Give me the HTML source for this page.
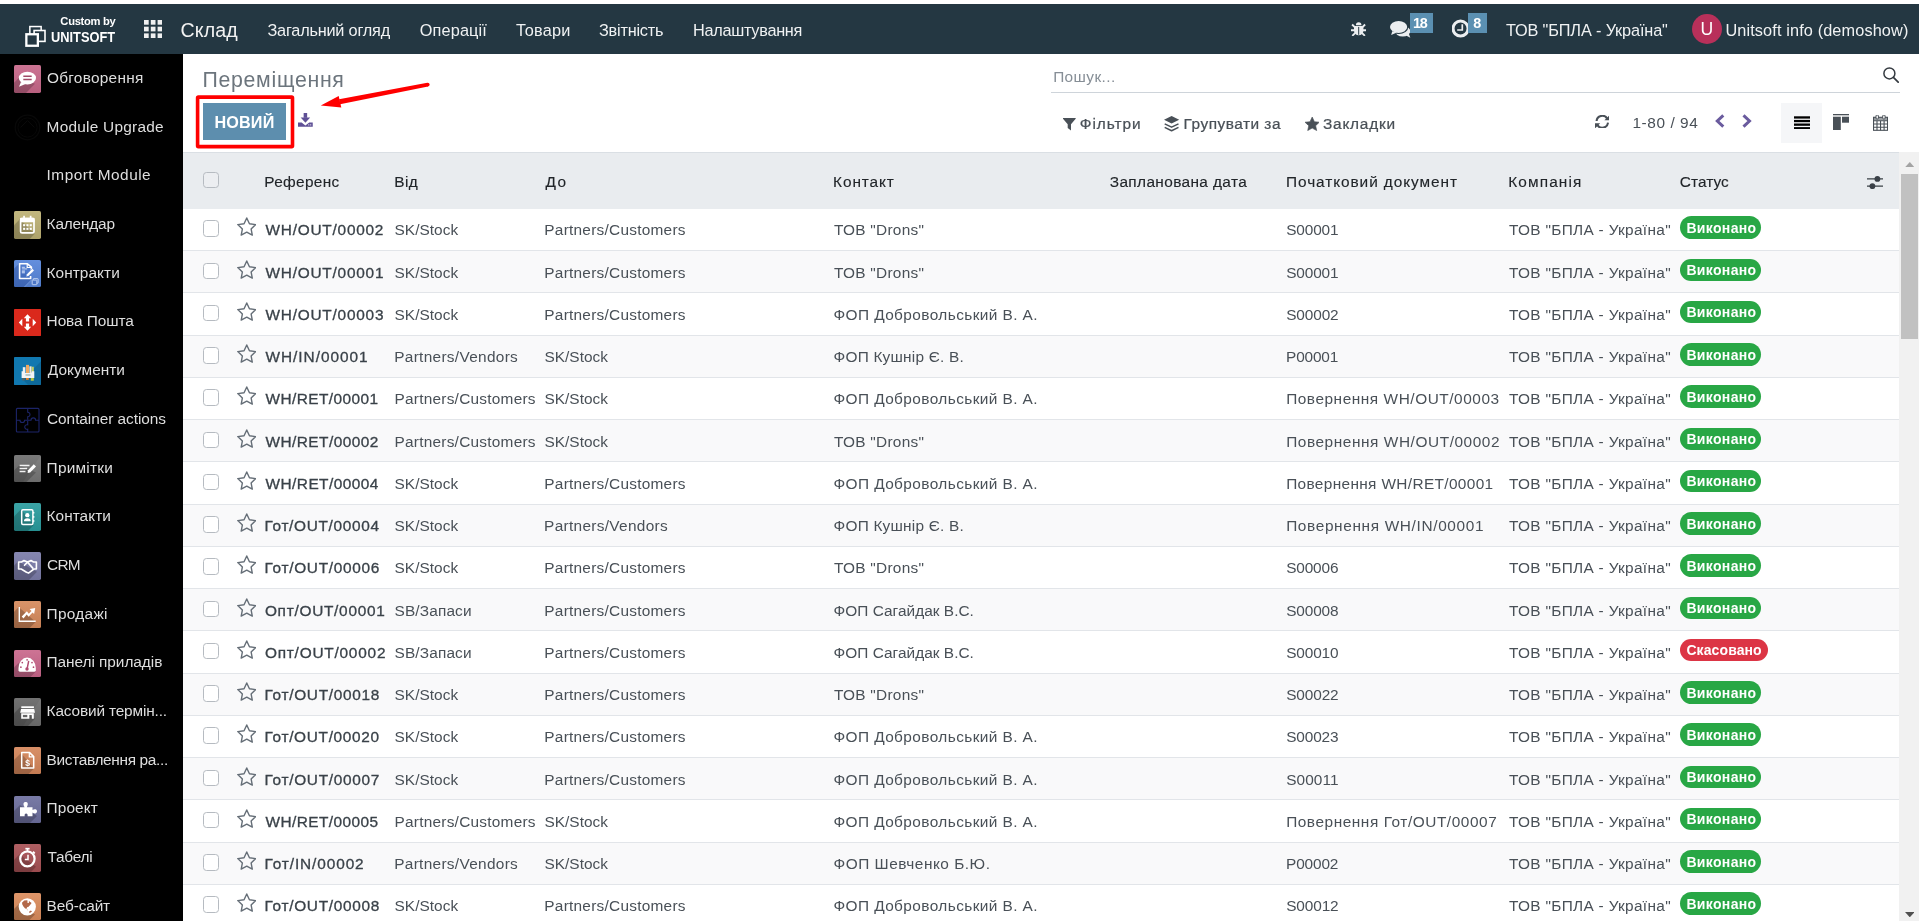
<!DOCTYPE html>
<html lang="uk"><head><meta charset="utf-8"><title>Переміщення</title><style>
html,body{margin:0;padding:0;background:#fff;}
body{width:1919px;height:921px;overflow:hidden;position:relative;font-family:"Liberation Sans", sans-serif;}
#app{position:absolute;left:0;top:0;width:1919px;height:921px;overflow:hidden;will-change:transform;}
.b{position:absolute;display:block;box-sizing:border-box;}
.t{position:absolute;white-space:nowrap;display:block;}
</style></head><body>
<div id="app">
<div class="b" style="left:0.00px;top:4.00px;width:1919.00px;height:49.50px;background:#243742;"></div>
<svg class="b" preserveAspectRatio="none" style="left:25.00px;top:25.00px;" width="22" height="22" viewBox="0 0 22 22"><g fill="none" stroke="#fff"><rect x="4.85" y="1.55" width="11.3" height="11.3" stroke-width="1.5"/><rect x="9.1" y="5.5" width="10.9" height="10.9" fill="#243742" stroke-width="1.6"/><rect x="1.35" y="9.25" width="11.5" height="11.5" fill="#243742" stroke-width="2.3"/></g></svg>
<span class="t" id="t0" style="left:60.36px;top:14.22px;font-size:11.2px;font-weight:700;color:#fff;line-height:15px;letter-spacing:-0.298px;">Custom by</span>
<span class="t" id="t1" style="left:51.20px;top:26.60px;font-size:15.3px;font-weight:700;color:#fff;line-height:20px;transform-origin:0 50%;transform:scaleX(0.838);">UNITSOFT</span>
<svg class="b" preserveAspectRatio="none" style="left:143.75px;top:20.00px;" width="18.4" height="18.2" viewBox="0 0 18.4 18.2"><g fill="#f0f0f0"><rect x="0.00" y="0.00" width="4.7" height="4.7"/><rect x="6.80" y="0.00" width="4.7" height="4.7"/><rect x="13.60" y="0.00" width="4.7" height="4.7"/><rect x="0.00" y="6.70" width="4.7" height="4.7"/><rect x="6.80" y="6.70" width="4.7" height="4.7"/><rect x="13.60" y="6.70" width="4.7" height="4.7"/><rect x="0.00" y="13.40" width="4.7" height="4.7"/><rect x="6.80" y="13.40" width="4.7" height="4.7"/><rect x="13.60" y="13.40" width="4.7" height="4.7"/></g></svg>
<span class="t" id="t2" style="left:180.52px;top:18.31px;font-size:19.6px;font-weight:400;color:#f2f2f2;line-height:25px;letter-spacing:0.126px;">Склад</span>
<span class="t" id="t3" style="left:267.50px;top:20.35px;font-size:16.3px;font-weight:400;color:#f0f2f3;line-height:21px;letter-spacing:-0.216px;">Загальний огляд</span>
<span class="t" id="t4" style="left:419.82px;top:20.35px;font-size:16.3px;font-weight:400;color:#f0f2f3;line-height:21px;letter-spacing:0.124px;">Операції</span>
<span class="t" id="t5" style="left:515.91px;top:20.35px;font-size:16.3px;font-weight:400;color:#f0f2f3;line-height:21px;letter-spacing:0.229px;">Товари</span>
<span class="t" id="t6" style="left:599.00px;top:20.35px;font-size:16.3px;font-weight:400;color:#f0f2f3;line-height:21px;letter-spacing:-0.216px;">Звітність</span>
<span class="t" id="t7" style="left:692.97px;top:20.35px;font-size:16.3px;font-weight:400;color:#f0f2f3;line-height:21px;letter-spacing:-0.283px;">Налаштування</span>
<svg class="b" preserveAspectRatio="none" style="left:1350.80px;top:20.90px;" width="15.2" height="15.3" viewBox="0 0 15.2 15.3"><g fill="#eceef0" stroke="#eceef0" stroke-linecap="butt"><path d="M4.900 4.300a2.800 3.100 0 0 1 5.600 0z" stroke="none"/><path d="M3 5H12.400V9.800a4.700 4.500 0 0 1-9.400 0z" stroke="none"/><g stroke-width="1.900" fill="none"><path d="M0 9.300H3.600M11.800 9.300H15.200M1.100 3.500L4 6.400M14.100 3.500L11.200 6.400M1.300 14.800L4.300 11.800M13.900 14.800L10.900 11.800"/></g><rect x="7.200" y="5.900" width="1" height="7.900" fill="#243742" stroke="none"/></g></svg>
<svg class="b" preserveAspectRatio="none" style="left:1389.80px;top:20.90px;" width="21" height="17" viewBox="0 0 21 17"><g fill="#eceef0"><ellipse cx="12.700" cy="10.300" rx="7.600" ry="5.300"/><path d="M15.500 14.300L20.300 16.800L18.800 12.500z"/><ellipse cx="8.600" cy="6" rx="9.700" ry="7.100" fill="#243742"/><ellipse cx="8.600" cy="6" rx="8.600" ry="6"/><path d="M2.300 10.200L1.100 14L7 11.600z"/></g></svg>
<div class="b" style="left:1409.80px;top:13.00px;width:23.00px;height:19.75px;background:#5b90b2;"></div>
<span class="t" id="t8" style="left:1413.00px;top:13.51px;font-size:14.4px;font-weight:700;color:#fff;line-height:19px;letter-spacing:-1.188px;">18</span>
<svg class="b" preserveAspectRatio="none" style="left:1451.70px;top:18.80px;" width="17.6" height="19.4" viewBox="0 0 17.6 19.4"><circle cx="8.550" cy="9.600" r="7.500" fill="none" stroke="#eceef0" stroke-width="3"/><path d="M10.300 5.200V11H5.200" fill="none" stroke="#eceef0" stroke-width="1.700"/></svg>
<div class="b" style="left:1467.90px;top:13.00px;width:19.00px;height:19.75px;background:#5b90b2;"></div>
<span class="t" id="t9" style="left:1473.32px;top:13.51px;font-size:14.4px;font-weight:700;color:#fff;line-height:19px;letter-spacing:-1.991px;">8</span>
<span class="t" id="t10" style="left:1505.92px;top:20.15px;font-size:16.3px;font-weight:400;color:#f0f2f3;line-height:21px;letter-spacing:-0.141px;">ТОВ "БПЛА - Україна"</span>
<div class="b" style="left:1692.10px;top:14.00px;width:30.00px;height:30.00px;background:#b8305a;border-radius:50%;"></div>
<span class="t" id="t11" style="left:1700.55px;top:17.70px;font-size:17.6px;font-weight:400;color:#fff;line-height:23px;letter-spacing:3.881px;">U</span>
<span class="t" id="t12" style="left:1725.40px;top:19.85px;font-size:16.3px;font-weight:400;color:#f0f2f3;line-height:21px;letter-spacing:0.125px;">Unitsoft info (demoshow)</span>
<div class="b" style="left:0.00px;top:53.50px;width:182.75px;height:870.00px;background:#000;"></div>
<svg class="b" preserveAspectRatio="none" style="left:14.00px;top:65.00px;" width="27" height="28" viewBox="0 0 27 27"><defs><clipPath id="ic0"><rect width="27" height="27" rx="1.600"/></clipPath></defs><g clip-path="url(#ic0)"><rect width="27" height="27" fill="#c8688a"/><rect width="27" height="27" fill="url(#gl)"/><polygon points="5.2,12 0,17.2 0,27 12,27 21,18" fill="#000" fill-opacity="0.2"/><ellipse cx="13.4" cy="12.600" rx="8.600" ry="6.100" fill="#fff"/><path d="M7 16.500 L5 20.900 L11.500 18.300z" fill="#fff"/><path d="M9.300 10.800H17.700M9.300 14H17.700" stroke="#a04a68" stroke-width="1.400"/></g></svg>
<span class="t" id="t13" style="left:46.92px;top:67.66px;font-size:15.4px;font-weight:400;color:#dedede;line-height:20px;letter-spacing:0.280px;">Обговорення</span>
<svg class="b" preserveAspectRatio="none" style="left:14.00px;top:114.00px;" width="27" height="27" viewBox="0 0 27 27"><circle cx="13.500" cy="13.500" r="12.300" fill="none" stroke="#090909" stroke-width="1.200"/><circle cx="13.500" cy="13.500" r="9.600" fill="none" stroke="#080808" stroke-width="1"/><path d="M6.500 13.500L13.500 6.500L20.500 13.500" fill="none" stroke="#0a0a0a" stroke-width="1"/></svg>
<span class="t" id="t14" style="left:46.60px;top:116.66px;font-size:15.4px;font-weight:400;color:#dedede;line-height:20px;letter-spacing:0.251px;">Module Upgrade</span>
<span class="t" id="t15" style="left:46.60px;top:164.66px;font-size:15.4px;font-weight:400;color:#dedede;line-height:20px;letter-spacing:0.471px;">Import Module</span>
<svg class="b" preserveAspectRatio="none" style="left:14.00px;top:211.00px;" width="27" height="28" viewBox="0 0 27 27"><defs><clipPath id="ic3"><rect width="27" height="27" rx="1.600"/></clipPath></defs><g clip-path="url(#ic3)"><rect width="27" height="27" fill="#bdb174"/><rect width="27" height="27" fill="url(#gl)"/><polygon points="5.8,8 0,13.8 0,27 15.8,27 20.8,22" fill="#000" fill-opacity="0.2"/><rect x="6.600" y="7.400" width="13.400" height="13.800" rx="1.500" fill="none" stroke="#fff" stroke-width="1.700"/><rect x="6" y="6.600" width="14.600" height="4.200" rx="1" fill="#fff"/><rect x="9.200" y="4.600" width="1.700" height="3.400" fill="#fff"/><rect x="15.800" y="4.600" width="1.700" height="3.400" fill="#fff"/><rect x="9.1" y="12.7" width="2.100" height="2" fill="#fff"/><rect x="12.4" y="12.7" width="2.100" height="2" fill="#fff"/><rect x="15.7" y="12.7" width="2.100" height="2" fill="#fff"/><rect x="9.1" y="16.2" width="2.100" height="2" fill="#fff"/><rect x="12.4" y="16.2" width="2.100" height="2" fill="#fff"/><rect x="15.7" y="16.2" width="2.100" height="2" fill="#fff"/></g></svg>
<span class="t" id="t16" style="left:46.60px;top:213.66px;font-size:15.4px;font-weight:400;color:#dedede;line-height:20px;letter-spacing:-0.170px;">Календар</span>
<svg class="b" preserveAspectRatio="none" style="left:14.00px;top:260.00px;" width="27" height="27" viewBox="0 0 27 27"><defs><clipPath id="ic4"><rect width="27" height="27" rx="1.600"/></clipPath></defs><g clip-path="url(#ic4)"><rect width="27" height="27" fill="#5685da"/><rect width="27" height="27" fill="url(#gl)"/><polygon points="0,0 0,27 10,27 27,10 27,27 27,27 10,27" fill="#000" fill-opacity="0"/><polygon points="4.800,4 0,8.800 0,27 9.700,27 17.400,19.300" fill="#1c3f8c" fill-opacity="0.350"/><polygon points="9.700,27 11.200,27 18.600,19.600 17.400,19.300" fill="#fff" fill-opacity="0.120"/><path d="M17.400 12.500V7.200L13.400 3.800H5.600V18.500H16.600V16" fill="#4470c4" fill-opacity="0.550" stroke="#fff" stroke-width="1.600" stroke-linejoin="round"/><path d="M13.200 3.900V7.500H17.200" fill="none" stroke="#fff" stroke-width="1.200"/><path d="M7.800 7.300H10.900M7.800 8.900H13.200" stroke="#c9d8f4" stroke-width="1"/><rect x="7.800" y="10.300" width="3.100" height="3.100" fill="#aec3ec"/><path d="M12 16.800L12.700 14.200L18.300 8.600L20.300 10.500L14.600 16.100z" fill="#fff" stroke="#4a76c8" stroke-width="0.500"/><rect x="19.300" y="18.600" width="4.800" height="4.600" rx="0.400" fill="none" stroke="#c4d4f2" stroke-width="0.900"/><rect x="18.200" y="20.100" width="4.600" height="4.600" rx="0.400" fill="#4a74c4" stroke="#c4d4f2" stroke-width="0.900"/></g></svg>
<span class="t" id="t17" style="left:46.60px;top:262.66px;font-size:15.4px;font-weight:400;color:#dedede;line-height:20px;letter-spacing:0.048px;">Контракти</span>
<svg class="b" preserveAspectRatio="none" style="left:14.00px;top:309.00px;" width="27" height="27" viewBox="0 0 27 27"><defs><clipPath id="ic5"><rect width="27" height="27" rx="0.4"/></clipPath></defs><g clip-path="url(#ic5)"><rect width="27" height="27" fill="#da291c"/><path d="M13.500 5.200L17.200 9.200H15.100V12.600H11.900V9.200H9.800z" fill="#fff"/><path d="M13.500 21.800L17.200 17.800H15.100V14.600H11.900V17.800H9.800z" fill="#fff"/><path d="M4.800 13.500L8.300 9.800V17.200z" fill="#fff"/><path d="M22.200 13.500L18.700 9.800V17.200z" fill="#fff"/></g></svg>
<span class="t" id="t18" style="left:46.60px;top:310.66px;font-size:15.4px;font-weight:400;color:#dedede;line-height:20px;letter-spacing:-0.083px;">Нова Пошта</span>
<svg class="b" preserveAspectRatio="none" style="left:14.00px;top:357.00px;" width="27" height="28" viewBox="0 0 27 27"><defs><clipPath id="ic6"><rect width="27" height="27" rx="0.4"/></clipPath></defs><g clip-path="url(#ic6)"><rect width="27" height="27" fill="#1178b0"/><polygon points="9,22 27,4 27,27 14,27" fill="#000" fill-opacity="0.120"/><rect x="8.800" y="9.800" width="2.600" height="7" fill="#e8eef2"/><rect x="12" y="7.600" width="3" height="9" fill="#f0a860"/><rect x="15.400" y="9" width="2.200" height="8" fill="#f4ead8"/><rect x="17.800" y="9.400" width="2" height="8" fill="#c8d060"/><path d="M7.600 13.800H10.300L11 15.400H17.200L17.900 13.800H20.300V20.300H7.600z" fill="#f2f4f6"/><rect x="11.500" y="16.800" width="5" height="1.100" fill="#8aa"/><rect x="8.200" y="20.300" width="2.600" height="2.300" fill="#566"/><rect x="12" y="20.300" width="2.800" height="1.700" fill="#f08020"/><rect x="16.800" y="20.300" width="3" height="2.600" fill="#b8c840"/></g></svg>
<span class="t" id="t19" style="left:47.80px;top:359.66px;font-size:15.4px;font-weight:400;color:#dedede;line-height:20px;letter-spacing:0.035px;">Документи</span>
<svg class="b" preserveAspectRatio="none" style="left:14.00px;top:406.00px;" width="27" height="27" viewBox="0 0 27 27"><g fill="none" stroke="#1c2468" stroke-width="1.100"><rect x="2.400" y="2.400" width="22.600" height="23.600" rx="1"/><path d="M13.700 2.400V6.200a2.300 2.300 0 1 1 0 4.600V13.800"/><path d="M13.700 14.600V18.800a2.300 2.300 0 1 0 0 4.400V26"/><path d="M2.400 14.200H6a2.300 2.300 0 1 0 4.600 0H13.700"/><path d="M13.700 14.200H17a2.300 2.300 0 1 1 4.600 0H25"/></g></svg>
<span class="t" id="t20" style="left:47.04px;top:408.66px;font-size:15.4px;font-weight:400;color:#dedede;line-height:20px;letter-spacing:-0.046px;">Container actions</span>
<svg class="b" preserveAspectRatio="none" style="left:14.00px;top:455.00px;" width="27" height="27" viewBox="0 0 27 27"><defs><clipPath id="ic8"><rect width="27" height="27" rx="1.600"/></clipPath></defs><g clip-path="url(#ic8)"><rect width="27" height="27" fill="#6e6e6e"/><rect width="27" height="27" fill="url(#gl)"/><polygon points="27,0 27,27 9,27" fill="#fff" fill-opacity="0.050"/><polygon points="5.6,10 0,15.6 0,27 12.5,27 22,17.5" fill="#000" fill-opacity="0.2"/><path d="M5.600 10.500H15.500M5.600 13.500H13.200M5.600 16.500H11.500" stroke="#f2f2f2" stroke-width="1.700"/><path d="M14 15.300L19.800 9.300L22 11.400L16.200 17.400L13.600 17.900z" fill="#fff"/></g></svg>
<span class="t" id="t21" style="left:46.60px;top:457.66px;font-size:15.4px;font-weight:400;color:#dedede;line-height:20px;letter-spacing:0.234px;">Примітки</span>
<svg class="b" preserveAspectRatio="none" style="left:14.00px;top:503.00px;" width="27" height="28" viewBox="0 0 27 27"><defs><clipPath id="ic9"><rect width="27" height="27" rx="1.600"/></clipPath></defs><g clip-path="url(#ic9)"><rect width="27" height="27" fill="#2a9c9e"/><rect width="27" height="27" fill="url(#gl)"/><polygon points="7,6 0,13 0,27 14,27 20,21" fill="#000" fill-opacity="0.2"/><rect x="7.700" y="6.600" width="11.200" height="14.200" rx="1.200" fill="none" stroke="#fff" stroke-width="1.500"/><circle cx="13.300" cy="11.700" r="2.100" fill="#fff"/><path d="M9.900 17.600a3.400 3 0 0 1 6.800 0z" fill="#fff"/><path d="M19.700 8.600v1.600M19.700 12.600v1.600M19.700 16.600v1.600" stroke="#fff" stroke-width="1.300"/></g></svg>
<span class="t" id="t22" style="left:46.60px;top:505.66px;font-size:15.4px;font-weight:400;color:#dedede;line-height:20px;letter-spacing:0.030px;">Контакти</span>
<svg class="b" preserveAspectRatio="none" style="left:14.00px;top:552.00px;" width="27" height="28" viewBox="0 0 27 27"><defs><clipPath id="ic10"><rect width="27" height="27" rx="1.600"/></clipPath></defs><g clip-path="url(#ic10)"><rect width="27" height="27" fill="#7b7ca9"/><rect width="27" height="27" fill="url(#gl)"/><polygon points="4,9 0,13 0,27 15,27 23,19" fill="#000" fill-opacity="0.2"/><g fill="none" stroke="#fff" stroke-width="1.600" stroke-linejoin="round" stroke-linecap="round"><path d="M4.600 9.600H7.500L10 8.300L13.500 9.600L17 8.300L19.500 9.600H22.400V16.400H20L14.500 20.300L12.500 19.600L7.200 16.400H4.600z"/><path d="M10.500 12.800L13.500 9.800L18.800 15.600"/></g></g></svg>
<span class="t" id="t23" style="left:47.04px;top:554.66px;font-size:15.4px;font-weight:400;color:#dedede;line-height:20px;letter-spacing:-0.724px;">CRM</span>
<svg class="b" preserveAspectRatio="none" style="left:14.00px;top:601.00px;" width="27" height="27" viewBox="0 0 27 27"><defs><clipPath id="ic11"><rect width="27" height="27" rx="1.600"/></clipPath></defs><g clip-path="url(#ic11)"><rect width="27" height="27" fill="#d68a5c"/><rect width="27" height="27" fill="url(#gl)"/><polygon points="4.7,6 0,10.7 0,27 15.599999999999998,27 21.7,20.9" fill="#000" fill-opacity="0.22"/><path d="M5.300 5.900V20.200H21.700" fill="none" stroke="#fff" stroke-width="1.400"/><path d="M7.700 15.500L12.900 10.300L14.800 12.700L17.500 9.900L15.600 8.100L21.200 7.100L20.100 13L18.500 11.400L14.600 15.700L12.700 13.400L9.500 17.400z" fill="#fff"/></g></svg>
<span class="t" id="t24" style="left:46.60px;top:603.66px;font-size:15.4px;font-weight:400;color:#dedede;line-height:20px;letter-spacing:0.289px;">Продажі</span>
<svg class="b" preserveAspectRatio="none" style="left:14.00px;top:650.00px;" width="27" height="27" viewBox="0 0 27 27"><defs><clipPath id="ic12"><rect width="27" height="27" rx="1.600"/></clipPath></defs><g clip-path="url(#ic12)"><rect width="27" height="27" fill="#c9678b"/><rect width="27" height="27" fill="url(#gl)"/><polygon points="4.5,13 0,17.5 0,27 16.5,27 21.8,21.7" fill="#000" fill-opacity="0.2"/><path d="M4.500 18a8.650 10.400 0 0 1 17.300 0v2.300a1.400 1.400 0 0 1-1.400 1.400H5.900a1.400 1.400 0 0 1-1.400-1.400z" fill="#fff"/><path d="M13 19.300L14.600 11.400" stroke="#b04a70" stroke-width="1.500" stroke-linecap="round"/><circle cx="13" cy="19" r="1.700" fill="#b04a70"/><g fill="#b04a70"><circle cx="6.900" cy="17.200" r=".850"/><circle cx="8.300" cy="12.600" r=".850"/><circle cx="13.100" cy="9.800" r=".850"/><circle cx="18" cy="12.600" r=".850"/><circle cx="19.500" cy="17.200" r=".850"/></g></g></svg>
<span class="t" id="t25" style="left:46.60px;top:651.66px;font-size:15.4px;font-weight:400;color:#dedede;line-height:20px;letter-spacing:-0.052px;">Панелі приладів</span>
<svg class="b" preserveAspectRatio="none" style="left:14.00px;top:698.00px;" width="27" height="28" viewBox="0 0 27 27"><defs><clipPath id="ic13"><rect width="27" height="27" rx="1.600"/></clipPath></defs><g clip-path="url(#ic13)"><rect width="27" height="27" fill="#666"/><rect width="27" height="27" fill="url(#gl)"/><polygon points="27,0 27,27 9,27" fill="#fff" fill-opacity="0.050"/><polygon points="6,9 0,15 0,27 14,27 21,20" fill="#000" fill-opacity="0.2"/><rect x="7.300" y="8" width="12.600" height="1.700" fill="#fff"/><path d="M7 10.500H20.200L21 14.200H6.200z" fill="#fff"/><path d="M7.200 14.600H19.800V20H17.800V16.300H15.400V20H7.200z" fill="#fff"/><rect x="8.900" y="16.300" width="4.400" height="2.200" fill="#666"/></g></svg>
<span class="t" id="t26" style="left:46.60px;top:700.66px;font-size:15.4px;font-weight:400;color:#dedede;line-height:20px;letter-spacing:-0.153px;">Касовий термін...</span>
<svg class="b" preserveAspectRatio="none" style="left:14.00px;top:747.00px;" width="27" height="27" viewBox="0 0 27 27"><defs><clipPath id="ic14"><rect width="27" height="27" rx="1.600"/></clipPath></defs><g clip-path="url(#ic14)"><rect width="27" height="27" fill="#d5865a"/><rect width="27" height="27" fill="url(#gl)"/><polygon points="7,6 0,13 0,27 14.5,27 20,21.5" fill="#000" fill-opacity="0.2"/><path d="M7.700 5.600H15.600L19.700 9.600V21H7.700z" fill="none" stroke="#fff" stroke-width="1.500" stroke-linejoin="round"/><path d="M15.300 5.900V9.900H19.400" fill="none" stroke="#fff" stroke-width="1.200"/><text x="13.600" y="18.500" font-size="8.500" font-weight="700" fill="#fff" text-anchor="middle" font-family="Liberation Sans, sans-serif">$</text></g></svg>
<span class="t" id="t27" style="left:46.60px;top:749.66px;font-size:15.4px;font-weight:400;color:#dedede;line-height:20px;letter-spacing:-0.331px;">Виставлення ра...</span>
<svg class="b" preserveAspectRatio="none" style="left:14.00px;top:796.00px;" width="27" height="27" viewBox="0 0 27 27"><defs><clipPath id="ic15"><rect width="27" height="27" rx="1.600"/></clipPath></defs><g clip-path="url(#ic15)"><rect width="27" height="27" fill="#6d6f9e"/><rect width="27" height="27" fill="url(#gl)"/><polygon points="6,9 0,15 0,27 16,27 23,20" fill="#000" fill-opacity="0.2"/><path d="M6 11.200H10.600C9.600 9.600 9.300 8.400 9.600 7.300C10 5.700 12.800 5.300 13.600 7C14.100 8.200 13.600 9.600 12.800 11.200H18.500V14.100C19.800 13.300 21 13 22.100 13.600C23.400 14.400 23.300 16.600 21.900 17.200C20.800 17.700 19.700 17.300 18.500 16.500V20.200H13.600C13.900 18.800 13.300 17.600 12.100 17.600C10.900 17.600 10.400 18.800 10.700 20.200H6z" fill="#fff"/></g></svg>
<span class="t" id="t28" style="left:46.60px;top:797.66px;font-size:15.4px;font-weight:400;color:#dedede;line-height:20px;letter-spacing:0.098px;">Проект</span>
<svg class="b" preserveAspectRatio="none" style="left:14.00px;top:844.00px;" width="27" height="28" viewBox="0 0 27 27"><defs><clipPath id="ic16"><rect width="27" height="27" rx="1.600"/></clipPath></defs><g clip-path="url(#ic16)"><rect width="27" height="27" fill="#a85155"/><rect width="27" height="27" fill="url(#gl)"/><polygon points="5.5,10 0,15.5 0,27 17,27 22,22" fill="#000" fill-opacity="0.2"/><circle cx="13.400" cy="14.300" r="7.200" fill="none" stroke="#fff" stroke-width="2.200"/><rect x="11.400" y="3.700" width="4.200" height="1.600" fill="#fff"/><rect x="12.700" y="4.600" width="1.600" height="2.600" fill="#fff"/><path d="M19 7.300L20.800 9" stroke="#fff" stroke-width="1.500"/><path d="M14 10.300V15H10.800" fill="none" stroke="#fff" stroke-width="1.500"/></g></svg>
<span class="t" id="t29" style="left:47.56px;top:846.66px;font-size:15.4px;font-weight:400;color:#dedede;line-height:20px;letter-spacing:-0.260px;">Табелі</span>
<svg class="b" preserveAspectRatio="none" style="left:14.00px;top:893.00px;" width="27" height="27" viewBox="0 0 27 27"><defs><clipPath id="ic17"><rect width="27" height="27" rx="1.600"/></clipPath></defs><g clip-path="url(#ic17)"><rect width="27" height="27" fill="#db8c5c"/><rect width="27" height="27" fill="url(#gl)"/><polygon points="5,11 0,16 0,27 15.5,27 21,21.5" fill="#000" fill-opacity="0.23"/><circle cx="13.300" cy="13.800" r="8.600" fill="#fff"/><path d="M8 9.700L10.200 7.500L13.100 7.300L14.100 8.400L15.300 8.300L17.600 10.100L16.100 11.900L14.600 13.800L13.100 14.300L12.400 16L10.900 15.300L9.400 13.400L8.300 11.600z" fill="#b3694a"/><circle cx="14.200" cy="9" r="0.900" fill="#fff"/><path d="M12.600 16.200L14 16.900L13.200 17.300z" fill="#b3694a"/><path d="M15.400 18.200L16.900 17.500L18 18.400L16.100 19.700L15.200 19.900z" fill="#b3694a"/></g></svg>
<span class="t" id="t30" style="left:46.60px;top:895.66px;font-size:15.4px;font-weight:400;color:#dedede;line-height:20px;letter-spacing:-0.132px;">Веб-сайт</span>
<svg class="b" width="0" height="0" style="left:0;top:0"><defs><linearGradient id="gl" x1="0" y1="0" x2="0" y2="1"><stop offset="0" stop-color="#fff" stop-opacity="0.080"/><stop offset="1" stop-color="#000" stop-opacity="0.080"/></linearGradient></defs></svg>
<div class="b" style="left:183.00px;top:152.00px;width:1736.00px;height:1.00px;background:#dee2e6;"></div>
<span class="t" id="t31" style="left:202.47px;top:65.72px;font-size:21.3px;font-weight:400;color:#6c757d;line-height:28px;letter-spacing:0.702px;">Переміщення</span>
<div class="b" style="left:203.00px;top:103.00px;width:83.00px;height:36.80px;background:#5d8eae;"></div>
<span class="t" id="t32" style="left:214.46px;top:111.89px;font-size:16.2px;font-weight:700;color:#fff;line-height:21px;letter-spacing:0.150px;">НОВИЙ</span>
<svg class="b" style="left:0;top:0" width="500" height="160" viewBox="0 0 500 160"><rect x="197.6" y="97.1" width="94.9" height="49.5" rx="0.8" fill="none" stroke="#ff0000" stroke-width="3.6" stroke-linejoin="round"/><polygon points="427.34,82.74 339.00,99.25 340.00,104.35 428.06,86.46" fill="#ff0000"/><circle cx="427.7" cy="84.6" r="1.9" fill="#ff0000"/><polygon points="320.8,105.4 338.7,96.1 341.3,107.5" fill="#ff0000"/></svg>
<svg class="b" preserveAspectRatio="none" style="left:298.25px;top:113.20px;" width="14.75" height="13.7" viewBox="0 0 14.75 13.7"><g fill="#5f5096"><rect x="5.650" y="0" width="3.500" height="4.800"/><polygon points="2.650,4.600 12.150,4.600 7.400,9.800"/><path d="M0 9.600H3.600L7.400 12.400L11.200 9.600H14.750V13.700H0z"/></g><rect x="10.300" y="11.400" width="1" height="1" fill="#fff"/><rect x="12.200" y="11.400" width="1" height="1" fill="#fff"/></svg>
<span class="t" id="t33" style="left:1053.15px;top:66.96px;font-size:15.4px;font-weight:400;color:#868e96;line-height:20px;letter-spacing:0.407px;">Пошук...</span>
<div class="b" style="left:1051.00px;top:92.00px;width:848.60px;height:1.00px;background:#ced4da;"></div>
<svg class="b" preserveAspectRatio="none" style="left:1883.30px;top:67.00px;" width="16.2" height="16.2" viewBox="0 0 16.2 16.2"><circle cx="6.400" cy="6.400" r="5.500" fill="none" stroke="#343a40" stroke-width="1.500"/><path d="M10.400 10.400L15.200 15.200" stroke="#343a40" stroke-width="1.700" stroke-linecap="round"/></svg>
<svg class="b" preserveAspectRatio="none" style="left:1063.40px;top:118.30px;" width="12.7" height="12.6" viewBox="0 0 12.7 12.6"><path d="M0.300 0H12.300a.5.500 0 0 1 .4.800L8 6.300V12.500L4.700 10V6.300L0 .8A.5.500 0 0 1 .3 0z" fill="#495057"/></svg>
<span class="t" id="t34" style="left:1079.76px;top:114.46px;font-size:15.4px;font-weight:400;color:#495057;line-height:20px;letter-spacing:0.935px;-webkit-text-stroke:0.24px #495057;">Фільтри</span>
<svg class="b" preserveAspectRatio="none" style="left:1164.40px;top:116.40px;" width="15.2" height="15.8" viewBox="0 0 15.2 15.8"><g fill="#495057"><path d="M7.600 0L15.200 3.800L7.600 7.600L0 3.800z"/></g><g fill="none" stroke="#495057" stroke-width="1.500" stroke-linejoin="round"><path d="M0.700 7.800L7.600 11.200L14.500 7.800"/><path d="M0.700 11.400L7.600 14.800L14.500 11.400"/></g></svg>
<span class="t" id="t35" style="left:1183.58px;top:114.46px;font-size:15.4px;font-weight:400;color:#495057;line-height:20px;letter-spacing:0.504px;-webkit-text-stroke:0.24px #495057;">Групувати за</span>
<svg class="b" preserveAspectRatio="none" style="left:1304.80px;top:117.30px;" width="14.4" height="13.6" viewBox="0 0 14.4 13.6"><polygon points="7.200,0 9.400,4.700 14.400,5.200 10.650,8.650 11.700,13.600 7.200,11.100 2.700,13.600 3.750,8.650 0,5.200 5,4.700" fill="#495057" stroke="#495057" stroke-width="0.600" stroke-linejoin="round"/></svg>
<span class="t" id="t36" style="left:1323.02px;top:114.46px;font-size:15.4px;font-weight:400;color:#495057;line-height:20px;letter-spacing:0.770px;-webkit-text-stroke:0.24px #495057;">Закладки</span>
<svg class="b" preserveAspectRatio="none" style="left:1594.50px;top:114.50px;" width="14.6" height="13.6" viewBox="0 0 14.6 13.6"><g fill="none" stroke="#495057" stroke-width="2.100"><path d="M1.600 6A5.700 5.600 0 0 1 12.200 3.600"/><path d="M13 7.600A5.700 5.600 0 0 1 2.400 10"/></g><polygon points="14.600,0.200 14.600,5.300 9.400,5.300" fill="#495057"/><polygon points="0,13.400 0,8.300 5.200,8.300" fill="#495057"/></svg>
<span class="t" id="t37" style="left:1632.46px;top:112.56px;font-size:15.4px;font-weight:400;color:#495057;line-height:20px;letter-spacing:0.573px;">1-80 / 94</span>
<svg class="b" preserveAspectRatio="none" style="left:1715.10px;top:113.90px;" width="9.8" height="14" viewBox="0 0 9.8 14"><path d="M8.300 1.300L2.300 7L8.300 12.700" fill="none" stroke="#6a5b9e" stroke-width="3"/></svg>
<svg class="b" preserveAspectRatio="none" style="left:1741.80px;top:113.90px;" width="9.8" height="14" viewBox="0 0 9.8 14"><path d="M1.500 1.300L7.500 7L1.500 12.700" fill="none" stroke="#6a5b9e" stroke-width="3"/></svg>
<div class="b" style="left:1781.00px;top:103.00px;width:41.00px;height:40.40px;background:#f5f6f8;"></div>
<svg class="b" preserveAspectRatio="none" style="left:1793.60px;top:115.80px;" width="16" height="13.6" viewBox="0 0 16 13.6"><rect x="0" y="0.30" width="16" height="2.300" fill="#000"/><rect x="0" y="3.90" width="16" height="2.300" fill="#000"/><rect x="0" y="7.50" width="16" height="2.300" fill="#000"/><rect x="0" y="11.10" width="16" height="2.300" fill="#000"/></svg>
<svg class="b" preserveAspectRatio="none" style="left:1833.20px;top:113.90px;" width="16" height="16" viewBox="0 0 16 16"><g fill="#495057"><rect x="0" y="0" width="16" height="1.300"/><rect x="0" y="2.700" width="7.800" height="13.300"/><rect x="9" y="2.700" width="7" height="6"/></g></svg>
<svg class="b" preserveAspectRatio="none" style="left:1872.80px;top:115.40px;" width="15.1" height="15.8" viewBox="0 0 15.1 15.8"><g fill="none" stroke="#495057" stroke-width="1.100"><rect x="0.550" y="2.300" width="14" height="13"/><path d="M0.550 5.800H14.550M0.550 9H14.550M0.550 12.200H14.550M4 5.800V15.300M7.550 5.800V15.300M11.100 5.800V15.300"/></g><rect x="0.500" y="2.300" width="14.100" height="3.200" fill="#495057" fill-opacity="0.550"/><rect x="3" y="0" width="2.400" height="4" rx="1" fill="#fff" stroke="#495057" stroke-width="1"/><rect x="9.700" y="0" width="2.400" height="4" rx="1" fill="#fff" stroke="#495057" stroke-width="1"/></svg>
<div class="b" style="left:183.00px;top:153.00px;width:1716.00px;height:56.00px;background:#e9ecef;"></div>
<div class="b" style="left:183.00px;top:152.00px;width:1736.00px;height:1.00px;background:#dadfe4;"></div>
<div class="b" style="left:203.00px;top:172.00px;width:16.00px;height:16.00px;background:#eceef1;border:1px solid #b6bbc1;border-radius:3.500px;"></div>
<span class="t" id="t38" style="left:264.35px;top:172.16px;font-size:15.4px;font-weight:400;color:#212529;line-height:20px;letter-spacing:0.301px;-webkit-text-stroke:0.120px #212529;">Референс</span>
<span class="t" id="t39" style="left:394.35px;top:172.16px;font-size:15.4px;font-weight:400;color:#212529;line-height:20px;letter-spacing:0.304px;-webkit-text-stroke:0.120px #212529;">Від</span>
<span class="t" id="t40" style="left:545.50px;top:172.16px;font-size:15.4px;font-weight:400;color:#212529;line-height:20px;letter-spacing:1.491px;-webkit-text-stroke:0.120px #212529;">До</span>
<span class="t" id="t41" style="left:833.06px;top:172.16px;font-size:15.4px;font-weight:400;color:#212529;line-height:20px;letter-spacing:0.904px;-webkit-text-stroke:0.120px #212529;">Контакт</span>
<span class="t" id="t42" style="left:1109.78px;top:172.16px;font-size:15.4px;font-weight:400;color:#212529;line-height:20px;letter-spacing:0.375px;-webkit-text-stroke:0.120px #212529;">Запланована дата</span>
<span class="t" id="t43" style="left:1286.00px;top:172.16px;font-size:15.4px;font-weight:400;color:#212529;line-height:20px;letter-spacing:0.924px;-webkit-text-stroke:0.120px #212529;">Початковий документ</span>
<span class="t" id="t44" style="left:1508.20px;top:172.16px;font-size:15.4px;font-weight:400;color:#212529;line-height:20px;letter-spacing:1.128px;-webkit-text-stroke:0.120px #212529;">Компанія</span>
<span class="t" id="t45" style="left:1679.80px;top:172.16px;font-size:15.4px;font-weight:400;color:#212529;line-height:20px;letter-spacing:0.071px;-webkit-text-stroke:0.120px #212529;">Статус</span>
<svg class="b" preserveAspectRatio="none" style="left:1866.60px;top:176.00px;" width="16.1" height="13.1" viewBox="0 0 16.1 13.1"><g stroke="#3a4047" stroke-width="1.300"><path d="M0 2.900H16.100M0 10.200H16.100"/></g><circle cx="10.400" cy="2.900" r="2.900" fill="#3a4047"/><circle cx="5.400" cy="10.200" r="2.900" fill="#3a4047"/></svg>
<div class="b" style="left:183.00px;top:209.00px;width:1716.00px;height:42.00px;background:#fff;"></div>
<div class="b" style="left:183.00px;top:250.00px;width:1716.00px;height:1.00px;background:#e2e5e9;"></div>
<div class="b" style="left:203.00px;top:220.00px;width:16.00px;height:17.00px;background:#fff;border:1px solid #b6bbc1;border-radius:3.500px;"></div>
<svg class="b" preserveAspectRatio="none" style="left:236.75px;top:217.00px;" width="19.5" height="19.25" viewBox="0 0 19.5 19.25"><polygon points="9.750,1 12.450,6.800 18.700,7.600 14.100,11.900 15.300,18.100 9.750,15.100 4.200,18.100 5.400,11.900 0.800,7.600 7.050,6.800" fill="none" stroke="#656e77" stroke-width="1.400" stroke-linejoin="round"/></svg>
<span class="t" id="t46" style="left:265.50px;top:219.66px;font-size:15.4px;font-weight:400;color:#3a4249;line-height:20px;letter-spacing:0.768px;-webkit-text-stroke:0.320px #3a4249;">WH/OUT/00002</span>
<span class="t" id="t47" style="left:394.53px;top:219.66px;font-size:15.4px;font-weight:400;color:#495057;line-height:20px;letter-spacing:0.044px;">SK/Stock</span>
<span class="t" id="t48" style="left:544.33px;top:219.66px;font-size:15.4px;font-weight:400;color:#495057;line-height:20px;letter-spacing:0.252px;">Partners/Customers</span>
<span class="t" id="t49" style="left:833.97px;top:219.66px;font-size:15.4px;font-weight:400;color:#495057;line-height:20px;letter-spacing:0.282px;">ТОВ "Drons"</span>
<span class="t" id="t50" style="left:1286.24px;top:219.66px;font-size:15.4px;font-weight:400;color:#495057;line-height:20px;letter-spacing:-0.150px;">S00001</span>
<span class="t" id="t51" style="left:1508.97px;top:219.66px;font-size:15.4px;font-weight:400;color:#495057;line-height:20px;letter-spacing:0.316px;">ТОВ "БПЛА - Україна"</span>
<div class="b" style="left:1680.00px;top:216.00px;width:81.00px;height:23.00px;background:#28a745;border-radius:11.500px;"></div>
<span class="t" id="t52" style="left:1686.40px;top:219.15px;font-size:14px;font-weight:700;color:#fff;line-height:18px;letter-spacing:0.34px;">Виконано</span>
<div class="b" style="left:183.00px;top:251.00px;width:1716.00px;height:42.00px;background:#f9f9fa;"></div>
<div class="b" style="left:183.00px;top:292.00px;width:1716.00px;height:1.00px;background:#e2e5e9;"></div>
<div class="b" style="left:203.00px;top:263.00px;width:16.00px;height:16.00px;background:#fff;border:1px solid #b6bbc1;border-radius:3.500px;"></div>
<svg class="b" preserveAspectRatio="none" style="left:236.75px;top:260.00px;" width="19.5" height="19.25" viewBox="0 0 19.5 19.25"><polygon points="9.750,1 12.450,6.800 18.700,7.600 14.100,11.900 15.300,18.100 9.750,15.100 4.200,18.100 5.400,11.900 0.800,7.600 7.050,6.800" fill="none" stroke="#656e77" stroke-width="1.400" stroke-linejoin="round"/></svg>
<span class="t" id="t53" style="left:265.50px;top:262.66px;font-size:15.4px;font-weight:400;color:#3a4249;line-height:20px;letter-spacing:0.772px;-webkit-text-stroke:0.320px #3a4249;">WH/OUT/00001</span>
<span class="t" id="t54" style="left:394.53px;top:262.66px;font-size:15.4px;font-weight:400;color:#495057;line-height:20px;letter-spacing:0.044px;">SK/Stock</span>
<span class="t" id="t55" style="left:544.33px;top:262.66px;font-size:15.4px;font-weight:400;color:#495057;line-height:20px;letter-spacing:0.252px;">Partners/Customers</span>
<span class="t" id="t56" style="left:833.97px;top:262.66px;font-size:15.4px;font-weight:400;color:#495057;line-height:20px;letter-spacing:0.282px;">ТОВ "Drons"</span>
<span class="t" id="t57" style="left:1286.24px;top:262.66px;font-size:15.4px;font-weight:400;color:#495057;line-height:20px;letter-spacing:-0.150px;">S00001</span>
<span class="t" id="t58" style="left:1508.97px;top:262.66px;font-size:15.4px;font-weight:400;color:#495057;line-height:20px;letter-spacing:0.316px;">ТОВ "БПЛА - Україна"</span>
<div class="b" style="left:1680.00px;top:259.00px;width:81.00px;height:22.00px;background:#28a745;border-radius:11.500px;"></div>
<span class="t" id="t59" style="left:1686.40px;top:261.15px;font-size:14px;font-weight:700;color:#fff;line-height:18px;letter-spacing:0.34px;">Виконано</span>
<div class="b" style="left:183.00px;top:293.00px;width:1716.00px;height:43.00px;background:#fff;"></div>
<div class="b" style="left:183.00px;top:335.00px;width:1716.00px;height:1.00px;background:#e2e5e9;"></div>
<div class="b" style="left:203.00px;top:305.00px;width:16.00px;height:16.00px;background:#fff;border:1px solid #b6bbc1;border-radius:3.500px;"></div>
<svg class="b" preserveAspectRatio="none" style="left:236.75px;top:302.00px;" width="19.5" height="19.25" viewBox="0 0 19.5 19.25"><polygon points="9.750,1 12.450,6.800 18.700,7.600 14.100,11.900 15.300,18.100 9.750,15.100 4.200,18.100 5.400,11.900 0.800,7.600 7.050,6.800" fill="none" stroke="#656e77" stroke-width="1.400" stroke-linejoin="round"/></svg>
<span class="t" id="t60" style="left:265.50px;top:304.66px;font-size:15.4px;font-weight:400;color:#3a4249;line-height:20px;letter-spacing:0.772px;-webkit-text-stroke:0.320px #3a4249;">WH/OUT/00003</span>
<span class="t" id="t61" style="left:394.53px;top:304.66px;font-size:15.4px;font-weight:400;color:#495057;line-height:20px;letter-spacing:0.044px;">SK/Stock</span>
<span class="t" id="t62" style="left:544.33px;top:304.66px;font-size:15.4px;font-weight:400;color:#495057;line-height:20px;letter-spacing:0.252px;">Partners/Customers</span>
<span class="t" id="t63" style="left:833.50px;top:304.66px;font-size:15.4px;font-weight:400;color:#495057;line-height:20px;letter-spacing:0.408px;">ФОП Добровольський В. А.</span>
<span class="t" id="t64" style="left:1286.24px;top:304.66px;font-size:15.4px;font-weight:400;color:#495057;line-height:20px;letter-spacing:-0.130px;">S00002</span>
<span class="t" id="t65" style="left:1508.97px;top:304.66px;font-size:15.4px;font-weight:400;color:#495057;line-height:20px;letter-spacing:0.316px;">ТОВ "БПЛА - Україна"</span>
<div class="b" style="left:1680.00px;top:301.00px;width:81.00px;height:22.00px;background:#28a745;border-radius:11.500px;"></div>
<span class="t" id="t66" style="left:1686.40px;top:303.15px;font-size:14px;font-weight:700;color:#fff;line-height:18px;letter-spacing:0.34px;">Виконано</span>
<div class="b" style="left:183.00px;top:336.00px;width:1716.00px;height:42.00px;background:#f9f9fa;"></div>
<div class="b" style="left:183.00px;top:377.00px;width:1716.00px;height:1.00px;background:#e2e5e9;"></div>
<div class="b" style="left:203.00px;top:347.00px;width:16.00px;height:17.00px;background:#fff;border:1px solid #b6bbc1;border-radius:3.500px;"></div>
<svg class="b" preserveAspectRatio="none" style="left:236.75px;top:344.00px;" width="19.5" height="19.25" viewBox="0 0 19.5 19.25"><polygon points="9.750,1 12.450,6.800 18.700,7.600 14.100,11.900 15.300,18.100 9.750,15.100 4.200,18.100 5.400,11.900 0.800,7.600 7.050,6.800" fill="none" stroke="#656e77" stroke-width="1.400" stroke-linejoin="round"/></svg>
<span class="t" id="t67" style="left:265.50px;top:346.66px;font-size:15.4px;font-weight:400;color:#3a4249;line-height:20px;letter-spacing:0.972px;-webkit-text-stroke:0.320px #3a4249;">WH/IN/00001</span>
<span class="t" id="t68" style="left:394.20px;top:346.66px;font-size:15.4px;font-weight:400;color:#495057;line-height:20px;letter-spacing:0.311px;">Partners/Vendors</span>
<span class="t" id="t69" style="left:544.43px;top:346.66px;font-size:15.4px;font-weight:400;color:#495057;line-height:20px;letter-spacing:0.044px;">SK/Stock</span>
<span class="t" id="t70" style="left:833.50px;top:346.66px;font-size:15.4px;font-weight:400;color:#495057;line-height:20px;letter-spacing:0.228px;">ФОП Кушнір Є. В.</span>
<span class="t" id="t71" style="left:1286.10px;top:346.66px;font-size:15.4px;font-weight:400;color:#495057;line-height:20px;letter-spacing:-0.188px;">P00001</span>
<span class="t" id="t72" style="left:1508.97px;top:346.66px;font-size:15.4px;font-weight:400;color:#495057;line-height:20px;letter-spacing:0.316px;">ТОВ "БПЛА - Україна"</span>
<div class="b" style="left:1680.00px;top:343.00px;width:81.00px;height:23.00px;background:#28a745;border-radius:11.500px;"></div>
<span class="t" id="t73" style="left:1686.40px;top:346.15px;font-size:14px;font-weight:700;color:#fff;line-height:18px;letter-spacing:0.34px;">Виконано</span>
<div class="b" style="left:183.00px;top:378.00px;width:1716.00px;height:42.00px;background:#fff;"></div>
<div class="b" style="left:183.00px;top:419.00px;width:1716.00px;height:1.00px;background:#e2e5e9;"></div>
<div class="b" style="left:203.00px;top:389.00px;width:16.00px;height:17.00px;background:#fff;border:1px solid #b6bbc1;border-radius:3.500px;"></div>
<svg class="b" preserveAspectRatio="none" style="left:236.75px;top:386.00px;" width="19.5" height="19.25" viewBox="0 0 19.5 19.25"><polygon points="9.750,1 12.450,6.800 18.700,7.600 14.100,11.900 15.300,18.100 9.750,15.100 4.200,18.100 5.400,11.900 0.800,7.600 7.050,6.800" fill="none" stroke="#656e77" stroke-width="1.400" stroke-linejoin="round"/></svg>
<span class="t" id="t74" style="left:265.50px;top:388.66px;font-size:15.4px;font-weight:400;color:#3a4249;line-height:20px;letter-spacing:0.436px;-webkit-text-stroke:0.320px #3a4249;">WH/RET/00001</span>
<span class="t" id="t75" style="left:394.43px;top:388.66px;font-size:15.4px;font-weight:400;color:#495057;line-height:20px;letter-spacing:0.252px;">Partners/Customers</span>
<span class="t" id="t76" style="left:544.43px;top:388.66px;font-size:15.4px;font-weight:400;color:#495057;line-height:20px;letter-spacing:0.044px;">SK/Stock</span>
<span class="t" id="t77" style="left:833.50px;top:388.66px;font-size:15.4px;font-weight:400;color:#495057;line-height:20px;letter-spacing:0.408px;">ФОП Добровольський В. А.</span>
<span class="t" id="t78" style="left:1286.13px;top:388.66px;font-size:15.4px;font-weight:400;color:#495057;line-height:20px;letter-spacing:0.549px;">Повернення WH/OUT/00003</span>
<span class="t" id="t79" style="left:1508.97px;top:388.66px;font-size:15.4px;font-weight:400;color:#495057;line-height:20px;letter-spacing:0.316px;">ТОВ "БПЛА - Україна"</span>
<div class="b" style="left:1680.00px;top:385.00px;width:81.00px;height:23.00px;background:#28a745;border-radius:11.500px;"></div>
<span class="t" id="t80" style="left:1686.40px;top:388.15px;font-size:14px;font-weight:700;color:#fff;line-height:18px;letter-spacing:0.34px;">Виконано</span>
<div class="b" style="left:183.00px;top:420.00px;width:1716.00px;height:42.00px;background:#f9f9fa;"></div>
<div class="b" style="left:183.00px;top:461.00px;width:1716.00px;height:1.00px;background:#e2e5e9;"></div>
<div class="b" style="left:203.00px;top:432.00px;width:16.00px;height:16.00px;background:#fff;border:1px solid #b6bbc1;border-radius:3.500px;"></div>
<svg class="b" preserveAspectRatio="none" style="left:236.75px;top:429.00px;" width="19.5" height="19.25" viewBox="0 0 19.5 19.25"><polygon points="9.750,1 12.450,6.800 18.700,7.600 14.100,11.900 15.300,18.100 9.750,15.100 4.200,18.100 5.400,11.900 0.800,7.600 7.050,6.800" fill="none" stroke="#656e77" stroke-width="1.400" stroke-linejoin="round"/></svg>
<span class="t" id="t81" style="left:265.50px;top:431.66px;font-size:15.4px;font-weight:400;color:#3a4249;line-height:20px;letter-spacing:0.455px;-webkit-text-stroke:0.320px #3a4249;">WH/RET/00002</span>
<span class="t" id="t82" style="left:394.43px;top:431.66px;font-size:15.4px;font-weight:400;color:#495057;line-height:20px;letter-spacing:0.252px;">Partners/Customers</span>
<span class="t" id="t83" style="left:544.43px;top:431.66px;font-size:15.4px;font-weight:400;color:#495057;line-height:20px;letter-spacing:0.044px;">SK/Stock</span>
<span class="t" id="t84" style="left:833.97px;top:431.66px;font-size:15.4px;font-weight:400;color:#495057;line-height:20px;letter-spacing:0.282px;">ТОВ "Drons"</span>
<span class="t" id="t85" style="left:1286.13px;top:431.66px;font-size:15.4px;font-weight:400;color:#495057;line-height:20px;letter-spacing:0.570px;">Повернення WH/OUT/00002</span>
<span class="t" id="t86" style="left:1508.97px;top:431.66px;font-size:15.4px;font-weight:400;color:#495057;line-height:20px;letter-spacing:0.316px;">ТОВ "БПЛА - Україна"</span>
<div class="b" style="left:1680.00px;top:428.00px;width:81.00px;height:22.00px;background:#28a745;border-radius:11.500px;"></div>
<span class="t" id="t87" style="left:1686.40px;top:430.15px;font-size:14px;font-weight:700;color:#fff;line-height:18px;letter-spacing:0.34px;">Виконано</span>
<div class="b" style="left:183.00px;top:462.00px;width:1716.00px;height:43.00px;background:#fff;"></div>
<div class="b" style="left:183.00px;top:504.00px;width:1716.00px;height:1.00px;background:#e2e5e9;"></div>
<div class="b" style="left:203.00px;top:474.00px;width:16.00px;height:16.00px;background:#fff;border:1px solid #b6bbc1;border-radius:3.500px;"></div>
<svg class="b" preserveAspectRatio="none" style="left:236.75px;top:471.00px;" width="19.5" height="19.25" viewBox="0 0 19.5 19.25"><polygon points="9.750,1 12.450,6.800 18.700,7.600 14.100,11.900 15.300,18.100 9.750,15.100 4.200,18.100 5.400,11.900 0.800,7.600 7.050,6.800" fill="none" stroke="#656e77" stroke-width="1.400" stroke-linejoin="round"/></svg>
<span class="t" id="t88" style="left:265.50px;top:473.66px;font-size:15.4px;font-weight:400;color:#3a4249;line-height:20px;letter-spacing:0.462px;-webkit-text-stroke:0.320px #3a4249;">WH/RET/00004</span>
<span class="t" id="t89" style="left:394.53px;top:473.66px;font-size:15.4px;font-weight:400;color:#495057;line-height:20px;letter-spacing:0.044px;">SK/Stock</span>
<span class="t" id="t90" style="left:544.33px;top:473.66px;font-size:15.4px;font-weight:400;color:#495057;line-height:20px;letter-spacing:0.252px;">Partners/Customers</span>
<span class="t" id="t91" style="left:833.50px;top:473.66px;font-size:15.4px;font-weight:400;color:#495057;line-height:20px;letter-spacing:0.408px;">ФОП Добровольський В. А.</span>
<span class="t" id="t92" style="left:1286.13px;top:473.66px;font-size:15.4px;font-weight:400;color:#495057;line-height:20px;letter-spacing:0.355px;">Повернення WH/RET/00001</span>
<span class="t" id="t93" style="left:1508.97px;top:473.66px;font-size:15.4px;font-weight:400;color:#495057;line-height:20px;letter-spacing:0.316px;">ТОВ "БПЛА - Україна"</span>
<div class="b" style="left:1680.00px;top:470.00px;width:81.00px;height:22.00px;background:#28a745;border-radius:11.500px;"></div>
<span class="t" id="t94" style="left:1686.40px;top:472.15px;font-size:14px;font-weight:700;color:#fff;line-height:18px;letter-spacing:0.34px;">Виконано</span>
<div class="b" style="left:183.00px;top:505.00px;width:1716.00px;height:42.00px;background:#f9f9fa;"></div>
<div class="b" style="left:183.00px;top:546.00px;width:1716.00px;height:1.00px;background:#e2e5e9;"></div>
<div class="b" style="left:203.00px;top:516.00px;width:16.00px;height:17.00px;background:#fff;border:1px solid #b6bbc1;border-radius:3.500px;"></div>
<svg class="b" preserveAspectRatio="none" style="left:236.75px;top:513.00px;" width="19.5" height="19.25" viewBox="0 0 19.5 19.25"><polygon points="9.750,1 12.450,6.800 18.700,7.600 14.100,11.900 15.300,18.100 9.750,15.100 4.200,18.100 5.400,11.900 0.800,7.600 7.050,6.800" fill="none" stroke="#656e77" stroke-width="1.400" stroke-linejoin="round"/></svg>
<span class="t" id="t95" style="left:264.51px;top:515.66px;font-size:15.4px;font-weight:400;color:#3a4249;line-height:20px;letter-spacing:0.675px;-webkit-text-stroke:0.320px #3a4249;">Гот/OUT/00004</span>
<span class="t" id="t96" style="left:394.53px;top:515.66px;font-size:15.4px;font-weight:400;color:#495057;line-height:20px;letter-spacing:0.044px;">SK/Stock</span>
<span class="t" id="t97" style="left:544.10px;top:515.66px;font-size:15.4px;font-weight:400;color:#495057;line-height:20px;letter-spacing:0.311px;">Partners/Vendors</span>
<span class="t" id="t98" style="left:833.50px;top:515.66px;font-size:15.4px;font-weight:400;color:#495057;line-height:20px;letter-spacing:0.228px;">ФОП Кушнір Є. В.</span>
<span class="t" id="t99" style="left:1286.13px;top:515.66px;font-size:15.4px;font-weight:400;color:#495057;line-height:20px;letter-spacing:0.648px;">Повернення WH/IN/00001</span>
<span class="t" id="t100" style="left:1508.97px;top:515.66px;font-size:15.4px;font-weight:400;color:#495057;line-height:20px;letter-spacing:0.316px;">ТОВ "БПЛА - Україна"</span>
<div class="b" style="left:1680.00px;top:512.00px;width:81.00px;height:23.00px;background:#28a745;border-radius:11.500px;"></div>
<span class="t" id="t101" style="left:1686.40px;top:515.15px;font-size:14px;font-weight:700;color:#fff;line-height:18px;letter-spacing:0.34px;">Виконано</span>
<div class="b" style="left:183.00px;top:547.00px;width:1716.00px;height:42.00px;background:#fff;"></div>
<div class="b" style="left:183.00px;top:588.00px;width:1716.00px;height:1.00px;background:#e2e5e9;"></div>
<div class="b" style="left:203.00px;top:558.00px;width:16.00px;height:17.00px;background:#fff;border:1px solid #b6bbc1;border-radius:3.500px;"></div>
<svg class="b" preserveAspectRatio="none" style="left:236.75px;top:555.00px;" width="19.5" height="19.25" viewBox="0 0 19.5 19.25"><polygon points="9.750,1 12.450,6.800 18.700,7.600 14.100,11.900 15.300,18.100 9.750,15.100 4.200,18.100 5.400,11.900 0.800,7.600 7.050,6.800" fill="none" stroke="#656e77" stroke-width="1.400" stroke-linejoin="round"/></svg>
<span class="t" id="t102" style="left:264.51px;top:557.66px;font-size:15.4px;font-weight:400;color:#3a4249;line-height:20px;letter-spacing:0.700px;-webkit-text-stroke:0.320px #3a4249;">Гот/OUT/00006</span>
<span class="t" id="t103" style="left:394.53px;top:557.66px;font-size:15.4px;font-weight:400;color:#495057;line-height:20px;letter-spacing:0.044px;">SK/Stock</span>
<span class="t" id="t104" style="left:544.33px;top:557.66px;font-size:15.4px;font-weight:400;color:#495057;line-height:20px;letter-spacing:0.252px;">Partners/Customers</span>
<span class="t" id="t105" style="left:833.97px;top:557.66px;font-size:15.4px;font-weight:400;color:#495057;line-height:20px;letter-spacing:0.282px;">ТОВ "Drons"</span>
<span class="t" id="t106" style="left:1286.24px;top:557.66px;font-size:15.4px;font-weight:400;color:#495057;line-height:20px;letter-spacing:-0.171px;">S00006</span>
<span class="t" id="t107" style="left:1508.97px;top:557.66px;font-size:15.4px;font-weight:400;color:#495057;line-height:20px;letter-spacing:0.316px;">ТОВ "БПЛА - Україна"</span>
<div class="b" style="left:1680.00px;top:554.00px;width:81.00px;height:23.00px;background:#28a745;border-radius:11.500px;"></div>
<span class="t" id="t108" style="left:1686.40px;top:557.15px;font-size:14px;font-weight:700;color:#fff;line-height:18px;letter-spacing:0.34px;">Виконано</span>
<div class="b" style="left:183.00px;top:589.00px;width:1716.00px;height:42.00px;background:#f9f9fa;"></div>
<div class="b" style="left:183.00px;top:630.00px;width:1716.00px;height:1.00px;background:#e2e5e9;"></div>
<div class="b" style="left:203.00px;top:601.00px;width:16.00px;height:16.00px;background:#fff;border:1px solid #b6bbc1;border-radius:3.500px;"></div>
<svg class="b" preserveAspectRatio="none" style="left:236.75px;top:598.00px;" width="19.5" height="19.25" viewBox="0 0 19.5 19.25"><polygon points="9.750,1 12.450,6.800 18.700,7.600 14.100,11.900 15.300,18.100 9.750,15.100 4.200,18.100 5.400,11.900 0.800,7.600 7.050,6.800" fill="none" stroke="#656e77" stroke-width="1.400" stroke-linejoin="round"/></svg>
<span class="t" id="t109" style="left:264.88px;top:600.66px;font-size:15.4px;font-weight:400;color:#3a4249;line-height:20px;letter-spacing:0.731px;-webkit-text-stroke:0.320px #3a4249;">Опт/OUT/00001</span>
<span class="t" id="t110" style="left:394.53px;top:600.66px;font-size:15.4px;font-weight:400;color:#495057;line-height:20px;letter-spacing:0.150px;">SB/Запаси</span>
<span class="t" id="t111" style="left:544.33px;top:600.66px;font-size:15.4px;font-weight:400;color:#495057;line-height:20px;letter-spacing:0.252px;">Partners/Customers</span>
<span class="t" id="t112" style="left:833.50px;top:600.66px;font-size:15.4px;font-weight:400;color:#495057;line-height:20px;letter-spacing:0.039px;">ФОП Сагайдак В.С.</span>
<span class="t" id="t113" style="left:1286.24px;top:600.66px;font-size:15.4px;font-weight:400;color:#495057;line-height:20px;letter-spacing:-0.150px;">S00008</span>
<span class="t" id="t114" style="left:1508.97px;top:600.66px;font-size:15.4px;font-weight:400;color:#495057;line-height:20px;letter-spacing:0.316px;">ТОВ "БПЛА - Україна"</span>
<div class="b" style="left:1680.00px;top:597.00px;width:81.00px;height:22.00px;background:#28a745;border-radius:11.500px;"></div>
<span class="t" id="t115" style="left:1686.40px;top:599.15px;font-size:14px;font-weight:700;color:#fff;line-height:18px;letter-spacing:0.34px;">Виконано</span>
<div class="b" style="left:183.00px;top:631.00px;width:1716.00px;height:43.00px;background:#fff;"></div>
<div class="b" style="left:183.00px;top:673.00px;width:1716.00px;height:1.00px;background:#e2e5e9;"></div>
<div class="b" style="left:203.00px;top:643.00px;width:16.00px;height:16.00px;background:#fff;border:1px solid #b6bbc1;border-radius:3.500px;"></div>
<svg class="b" preserveAspectRatio="none" style="left:236.75px;top:640.00px;" width="19.5" height="19.25" viewBox="0 0 19.5 19.25"><polygon points="9.750,1 12.450,6.800 18.700,7.600 14.100,11.900 15.300,18.100 9.750,15.100 4.200,18.100 5.400,11.900 0.800,7.600 7.050,6.800" fill="none" stroke="#656e77" stroke-width="1.400" stroke-linejoin="round"/></svg>
<span class="t" id="t116" style="left:264.89px;top:642.66px;font-size:15.4px;font-weight:400;color:#3a4249;line-height:20px;letter-spacing:0.781px;-webkit-text-stroke:0.320px #3a4249;">Опт/OUT/00002</span>
<span class="t" id="t117" style="left:394.53px;top:642.66px;font-size:15.4px;font-weight:400;color:#495057;line-height:20px;letter-spacing:0.150px;">SB/Запаси</span>
<span class="t" id="t118" style="left:544.33px;top:642.66px;font-size:15.4px;font-weight:400;color:#495057;line-height:20px;letter-spacing:0.252px;">Partners/Customers</span>
<span class="t" id="t119" style="left:833.50px;top:642.66px;font-size:15.4px;font-weight:400;color:#495057;line-height:20px;letter-spacing:0.039px;">ФОП Сагайдак В.С.</span>
<span class="t" id="t120" style="left:1286.24px;top:642.66px;font-size:15.4px;font-weight:400;color:#495057;line-height:20px;letter-spacing:-0.162px;">S00010</span>
<span class="t" id="t121" style="left:1508.97px;top:642.66px;font-size:15.4px;font-weight:400;color:#495057;line-height:20px;letter-spacing:0.316px;">ТОВ "БПЛА - Україна"</span>
<div class="b" style="left:1680.00px;top:639.00px;width:87.60px;height:22.00px;background:#dc3545;border-radius:11.500px;"></div>
<span class="t" id="t122" style="left:1686.40px;top:641.15px;font-size:14px;font-weight:700;color:#fff;line-height:18px;letter-spacing:0.1px;">Скасовано</span>
<div class="b" style="left:183.00px;top:674.00px;width:1716.00px;height:42.00px;background:#f9f9fa;"></div>
<div class="b" style="left:183.00px;top:715.00px;width:1716.00px;height:1.00px;background:#e2e5e9;"></div>
<div class="b" style="left:203.00px;top:685.00px;width:16.00px;height:17.00px;background:#fff;border:1px solid #b6bbc1;border-radius:3.500px;"></div>
<svg class="b" preserveAspectRatio="none" style="left:236.75px;top:682.00px;" width="19.5" height="19.25" viewBox="0 0 19.5 19.25"><polygon points="9.750,1 12.450,6.800 18.700,7.600 14.100,11.900 15.300,18.100 9.750,15.100 4.200,18.100 5.400,11.900 0.800,7.600 7.050,6.800" fill="none" stroke="#656e77" stroke-width="1.400" stroke-linejoin="round"/></svg>
<span class="t" id="t123" style="left:264.51px;top:684.66px;font-size:15.4px;font-weight:400;color:#3a4249;line-height:20px;letter-spacing:0.701px;-webkit-text-stroke:0.320px #3a4249;">Гот/OUT/00018</span>
<span class="t" id="t124" style="left:394.53px;top:684.66px;font-size:15.4px;font-weight:400;color:#495057;line-height:20px;letter-spacing:0.044px;">SK/Stock</span>
<span class="t" id="t125" style="left:544.33px;top:684.66px;font-size:15.4px;font-weight:400;color:#495057;line-height:20px;letter-spacing:0.252px;">Partners/Customers</span>
<span class="t" id="t126" style="left:833.97px;top:684.66px;font-size:15.4px;font-weight:400;color:#495057;line-height:20px;letter-spacing:0.282px;">ТОВ "Drons"</span>
<span class="t" id="t127" style="left:1286.24px;top:684.66px;font-size:15.4px;font-weight:400;color:#495057;line-height:20px;letter-spacing:-0.127px;">S00022</span>
<span class="t" id="t128" style="left:1508.97px;top:684.66px;font-size:15.4px;font-weight:400;color:#495057;line-height:20px;letter-spacing:0.316px;">ТОВ "БПЛА - Україна"</span>
<div class="b" style="left:1680.00px;top:681.00px;width:81.00px;height:23.00px;background:#28a745;border-radius:11.500px;"></div>
<span class="t" id="t129" style="left:1686.40px;top:684.15px;font-size:14px;font-weight:700;color:#fff;line-height:18px;letter-spacing:0.34px;">Виконано</span>
<div class="b" style="left:183.00px;top:716.00px;width:1716.00px;height:42.00px;background:#fff;"></div>
<div class="b" style="left:183.00px;top:757.00px;width:1716.00px;height:1.00px;background:#e2e5e9;"></div>
<div class="b" style="left:203.00px;top:727.00px;width:16.00px;height:17.00px;background:#fff;border:1px solid #b6bbc1;border-radius:3.500px;"></div>
<svg class="b" preserveAspectRatio="none" style="left:236.75px;top:724.00px;" width="19.5" height="19.25" viewBox="0 0 19.5 19.25"><polygon points="9.750,1 12.450,6.800 18.700,7.600 14.100,11.900 15.300,18.100 9.750,15.100 4.200,18.100 5.400,11.900 0.800,7.600 7.050,6.800" fill="none" stroke="#656e77" stroke-width="1.400" stroke-linejoin="round"/></svg>
<span class="t" id="t130" style="left:264.51px;top:726.66px;font-size:15.4px;font-weight:400;color:#3a4249;line-height:20px;letter-spacing:0.688px;-webkit-text-stroke:0.320px #3a4249;">Гот/OUT/00020</span>
<span class="t" id="t131" style="left:394.53px;top:726.66px;font-size:15.4px;font-weight:400;color:#495057;line-height:20px;letter-spacing:0.044px;">SK/Stock</span>
<span class="t" id="t132" style="left:544.33px;top:726.66px;font-size:15.4px;font-weight:400;color:#495057;line-height:20px;letter-spacing:0.252px;">Partners/Customers</span>
<span class="t" id="t133" style="left:833.50px;top:726.66px;font-size:15.4px;font-weight:400;color:#495057;line-height:20px;letter-spacing:0.408px;">ФОП Добровольський В. А.</span>
<span class="t" id="t134" style="left:1286.24px;top:726.66px;font-size:15.4px;font-weight:400;color:#495057;line-height:20px;letter-spacing:-0.144px;">S00023</span>
<span class="t" id="t135" style="left:1508.97px;top:726.66px;font-size:15.4px;font-weight:400;color:#495057;line-height:20px;letter-spacing:0.316px;">ТОВ "БПЛА - Україна"</span>
<div class="b" style="left:1680.00px;top:723.00px;width:81.00px;height:23.00px;background:#28a745;border-radius:11.500px;"></div>
<span class="t" id="t136" style="left:1686.40px;top:726.15px;font-size:14px;font-weight:700;color:#fff;line-height:18px;letter-spacing:0.34px;">Виконано</span>
<div class="b" style="left:183.00px;top:758.00px;width:1716.00px;height:42.00px;background:#f9f9fa;"></div>
<div class="b" style="left:183.00px;top:799.00px;width:1716.00px;height:1.00px;background:#e2e5e9;"></div>
<div class="b" style="left:203.00px;top:770.00px;width:16.00px;height:16.00px;background:#fff;border:1px solid #b6bbc1;border-radius:3.500px;"></div>
<svg class="b" preserveAspectRatio="none" style="left:236.75px;top:767.00px;" width="19.5" height="19.25" viewBox="0 0 19.5 19.25"><polygon points="9.750,1 12.450,6.800 18.700,7.600 14.100,11.900 15.300,18.100 9.750,15.100 4.200,18.100 5.400,11.900 0.800,7.600 7.050,6.800" fill="none" stroke="#656e77" stroke-width="1.400" stroke-linejoin="round"/></svg>
<span class="t" id="t137" style="left:264.51px;top:769.66px;font-size:15.4px;font-weight:400;color:#3a4249;line-height:20px;letter-spacing:0.703px;-webkit-text-stroke:0.320px #3a4249;">Гот/OUT/00007</span>
<span class="t" id="t138" style="left:394.53px;top:769.66px;font-size:15.4px;font-weight:400;color:#495057;line-height:20px;letter-spacing:0.044px;">SK/Stock</span>
<span class="t" id="t139" style="left:544.33px;top:769.66px;font-size:15.4px;font-weight:400;color:#495057;line-height:20px;letter-spacing:0.252px;">Partners/Customers</span>
<span class="t" id="t140" style="left:833.50px;top:769.66px;font-size:15.4px;font-weight:400;color:#495057;line-height:20px;letter-spacing:0.408px;">ФОП Добровольський В. А.</span>
<span class="t" id="t141" style="left:1286.24px;top:769.66px;font-size:15.4px;font-weight:400;color:#495057;line-height:20px;letter-spacing:0.070px;">S00011</span>
<span class="t" id="t142" style="left:1508.97px;top:769.66px;font-size:15.4px;font-weight:400;color:#495057;line-height:20px;letter-spacing:0.316px;">ТОВ "БПЛА - Україна"</span>
<div class="b" style="left:1680.00px;top:766.00px;width:81.00px;height:22.00px;background:#28a745;border-radius:11.500px;"></div>
<span class="t" id="t143" style="left:1686.40px;top:768.15px;font-size:14px;font-weight:700;color:#fff;line-height:18px;letter-spacing:0.34px;">Виконано</span>
<div class="b" style="left:183.00px;top:800.00px;width:1716.00px;height:43.00px;background:#fff;"></div>
<div class="b" style="left:183.00px;top:842.00px;width:1716.00px;height:1.00px;background:#e2e5e9;"></div>
<div class="b" style="left:203.00px;top:812.00px;width:16.00px;height:16.00px;background:#fff;border:1px solid #b6bbc1;border-radius:3.500px;"></div>
<svg class="b" preserveAspectRatio="none" style="left:236.75px;top:809.00px;" width="19.5" height="19.25" viewBox="0 0 19.5 19.25"><polygon points="9.750,1 12.450,6.800 18.700,7.600 14.100,11.900 15.300,18.100 9.750,15.100 4.200,18.100 5.400,11.900 0.800,7.600 7.050,6.800" fill="none" stroke="#656e77" stroke-width="1.400" stroke-linejoin="round"/></svg>
<span class="t" id="t144" style="left:265.50px;top:811.66px;font-size:15.4px;font-weight:400;color:#3a4249;line-height:20px;letter-spacing:0.438px;-webkit-text-stroke:0.320px #3a4249;">WH/RET/00005</span>
<span class="t" id="t145" style="left:394.43px;top:811.66px;font-size:15.4px;font-weight:400;color:#495057;line-height:20px;letter-spacing:0.252px;">Partners/Customers</span>
<span class="t" id="t146" style="left:544.43px;top:811.66px;font-size:15.4px;font-weight:400;color:#495057;line-height:20px;letter-spacing:0.044px;">SK/Stock</span>
<span class="t" id="t147" style="left:833.50px;top:811.66px;font-size:15.4px;font-weight:400;color:#495057;line-height:20px;letter-spacing:0.408px;">ФОП Добровольський В. А.</span>
<span class="t" id="t148" style="left:1286.13px;top:811.66px;font-size:15.4px;font-weight:400;color:#495057;line-height:20px;letter-spacing:0.555px;">Повернення Гот/OUT/00007</span>
<span class="t" id="t149" style="left:1508.97px;top:811.66px;font-size:15.4px;font-weight:400;color:#495057;line-height:20px;letter-spacing:0.316px;">ТОВ "БПЛА - Україна"</span>
<div class="b" style="left:1680.00px;top:808.00px;width:81.00px;height:22.00px;background:#28a745;border-radius:11.500px;"></div>
<span class="t" id="t150" style="left:1686.40px;top:810.15px;font-size:14px;font-weight:700;color:#fff;line-height:18px;letter-spacing:0.34px;">Виконано</span>
<div class="b" style="left:183.00px;top:843.00px;width:1716.00px;height:42.00px;background:#f9f9fa;"></div>
<div class="b" style="left:183.00px;top:884.00px;width:1716.00px;height:1.00px;background:#e2e5e9;"></div>
<div class="b" style="left:203.00px;top:854.00px;width:16.00px;height:17.00px;background:#fff;border:1px solid #b6bbc1;border-radius:3.500px;"></div>
<svg class="b" preserveAspectRatio="none" style="left:236.75px;top:851.00px;" width="19.5" height="19.25" viewBox="0 0 19.5 19.25"><polygon points="9.750,1 12.450,6.800 18.700,7.600 14.100,11.900 15.300,18.100 9.750,15.100 4.200,18.100 5.400,11.900 0.800,7.600 7.050,6.800" fill="none" stroke="#656e77" stroke-width="1.400" stroke-linejoin="round"/></svg>
<span class="t" id="t151" style="left:264.51px;top:853.66px;font-size:15.4px;font-weight:400;color:#3a4249;line-height:20px;letter-spacing:0.897px;-webkit-text-stroke:0.320px #3a4249;">Гот/IN/00002</span>
<span class="t" id="t152" style="left:394.20px;top:853.66px;font-size:15.4px;font-weight:400;color:#495057;line-height:20px;letter-spacing:0.311px;">Partners/Vendors</span>
<span class="t" id="t153" style="left:544.43px;top:853.66px;font-size:15.4px;font-weight:400;color:#495057;line-height:20px;letter-spacing:0.044px;">SK/Stock</span>
<span class="t" id="t154" style="left:833.50px;top:853.66px;font-size:15.4px;font-weight:400;color:#495057;line-height:20px;letter-spacing:0.517px;">ФОП Шевченко Б.Ю.</span>
<span class="t" id="t155" style="left:1286.10px;top:853.66px;font-size:15.4px;font-weight:400;color:#495057;line-height:20px;letter-spacing:-0.164px;">P00002</span>
<span class="t" id="t156" style="left:1508.97px;top:853.66px;font-size:15.4px;font-weight:400;color:#495057;line-height:20px;letter-spacing:0.316px;">ТОВ "БПЛА - Україна"</span>
<div class="b" style="left:1680.00px;top:850.00px;width:81.00px;height:23.00px;background:#28a745;border-radius:11.500px;"></div>
<span class="t" id="t157" style="left:1686.40px;top:853.15px;font-size:14px;font-weight:700;color:#fff;line-height:18px;letter-spacing:0.34px;">Виконано</span>
<div class="b" style="left:183.00px;top:885.00px;width:1716.00px;height:42.00px;background:#fff;"></div>
<div class="b" style="left:183.00px;top:926.00px;width:1716.00px;height:1.00px;background:#e2e5e9;"></div>
<div class="b" style="left:203.00px;top:896.00px;width:16.00px;height:17.00px;background:#fff;border:1px solid #b6bbc1;border-radius:3.500px;"></div>
<svg class="b" preserveAspectRatio="none" style="left:236.75px;top:893.00px;" width="19.5" height="19.25" viewBox="0 0 19.5 19.25"><polygon points="9.750,1 12.450,6.800 18.700,7.600 14.100,11.900 15.300,18.100 9.750,15.100 4.200,18.100 5.400,11.900 0.800,7.600 7.050,6.800" fill="none" stroke="#656e77" stroke-width="1.400" stroke-linejoin="round"/></svg>
<span class="t" id="t158" style="left:264.51px;top:895.66px;font-size:15.4px;font-weight:400;color:#3a4249;line-height:20px;letter-spacing:0.700px;-webkit-text-stroke:0.320px #3a4249;">Гот/OUT/00008</span>
<span class="t" id="t159" style="left:394.53px;top:895.66px;font-size:15.4px;font-weight:400;color:#495057;line-height:20px;letter-spacing:0.044px;">SK/Stock</span>
<span class="t" id="t160" style="left:544.33px;top:895.66px;font-size:15.4px;font-weight:400;color:#495057;line-height:20px;letter-spacing:0.252px;">Partners/Customers</span>
<span class="t" id="t161" style="left:833.50px;top:895.66px;font-size:15.4px;font-weight:400;color:#495057;line-height:20px;letter-spacing:0.408px;">ФОП Добровольський В. А.</span>
<span class="t" id="t162" style="left:1286.24px;top:895.66px;font-size:15.4px;font-weight:400;color:#495057;line-height:20px;letter-spacing:-0.130px;">S00012</span>
<span class="t" id="t163" style="left:1508.97px;top:895.66px;font-size:15.4px;font-weight:400;color:#495057;line-height:20px;letter-spacing:0.316px;">ТОВ "БПЛА - Україна"</span>
<div class="b" style="left:1680.00px;top:892.00px;width:81.00px;height:23.00px;background:#28a745;border-radius:11.500px;"></div>
<span class="t" id="t164" style="left:1686.40px;top:895.15px;font-size:14px;font-weight:700;color:#fff;line-height:18px;letter-spacing:0.34px;">Виконано</span>
<div class="b" style="left:1899.00px;top:152.00px;width:20.00px;height:769.00px;background:#f1f1f1;"></div>
<div class="b" style="left:1901.30px;top:174.00px;width:16.60px;height:164.50px;background:#c1c1c1;"></div>
<svg class="b" preserveAspectRatio="none" style="left:1904.90px;top:162.00px;" width="9.6" height="5.3" viewBox="0 0 9.6 5.3"><polygon points="0,5.300 4.800,0 9.600,5.300" fill="#a3a3a3"/></svg>
<svg class="b" preserveAspectRatio="none" style="left:1904.90px;top:911.90px;" width="9.4" height="5.4" viewBox="0 0 9.4 5.4"><polygon points="0,0 4.800,5.300 9.600,0" fill="#505050"/></svg>
</div>
</body></html>
